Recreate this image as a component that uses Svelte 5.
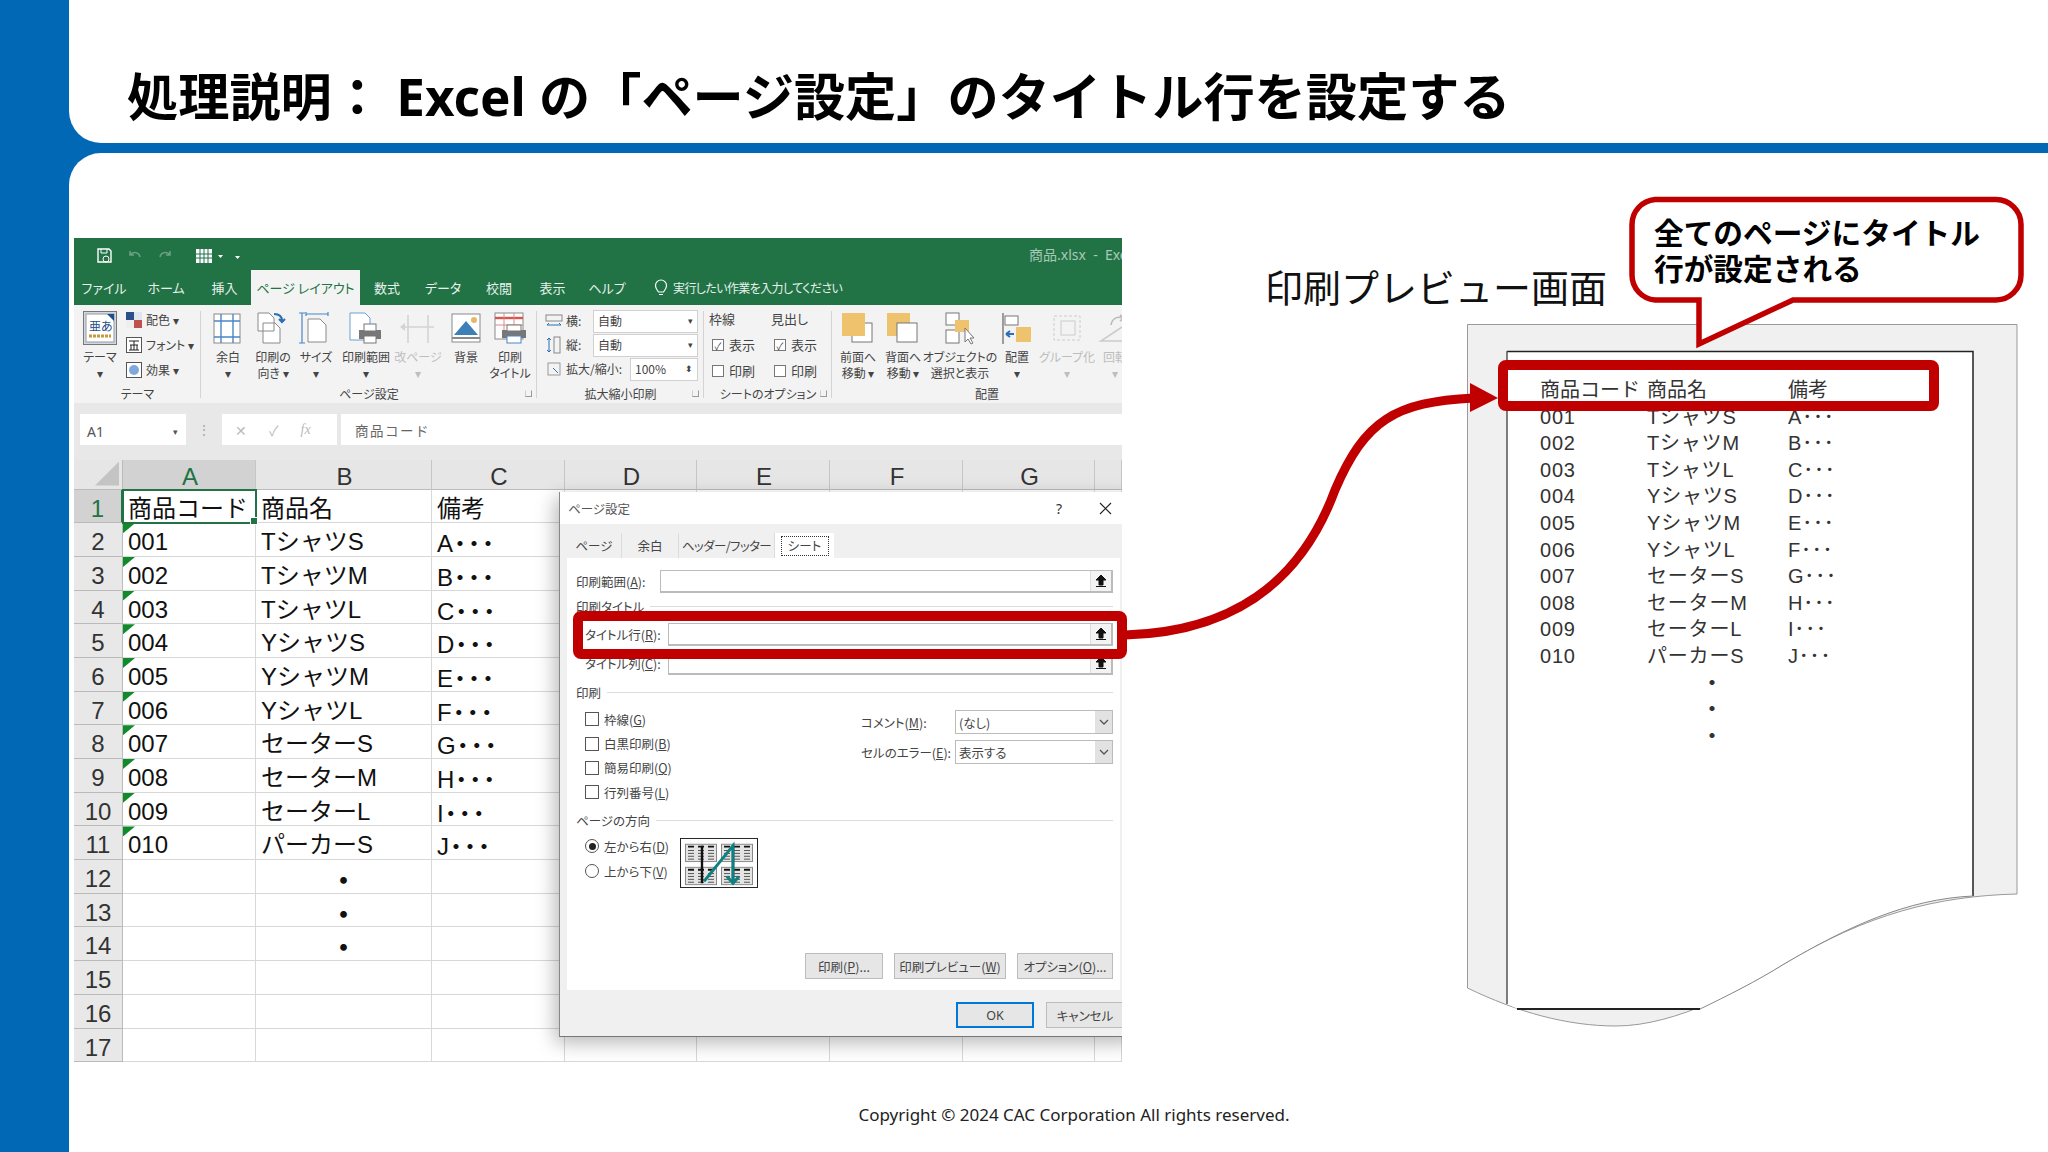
<script>
  const tabs = [
    { t: 'ファイル', w: 60 }, { t: 'ホーム', w: 64 }, { t: '挿入', w: 53 },
    { t: 'ページ レイアウト', w: 109, on: true }, { t: '数式', w: 54 }, { t: 'データ', w: 58 },
    { t: '校閲', w: 54 }, { t: '表示', w: 53 }, { t: 'ヘルプ', w: 56 }
  ];
  const pageBtns = [
    { w: 44, i: 'margin', l: ['余白', '▾'] },
    { w: 46, i: 'orient', l: ['印刷の', '向き ▾'] },
    { w: 40, i: 'size', l: ['サイズ', '▾'] },
    { w: 60, i: 'area', l: ['印刷範囲', '▾'] },
    { w: 44, i: 'break', l: ['改ページ', '▾'], off: true },
    { w: 52, i: 'bg', l: ['背景'] },
    { w: 36, i: 'titles', l: ['印刷', 'タイトル'] }
  ];
  const arrangeBtns = [
    { w: 44, i: 'front', l: ['前面へ', '移動 ▾'] },
    { w: 46, i: 'back', l: ['背面へ', '移動 ▾'] },
    { w: 68, i: 'select', l: ['オブジェクトの', '選択と表示'] },
    { w: 46, i: 'align', l: ['配置', '▾'] },
    { w: 54, i: 'group', l: ['グループ化', '▾'], off: true },
    { w: 42, i: 'rotate', l: ['回転', '▾'], off: true }
  ];
  const columns = ['A', 'B', 'C', 'D', 'E', 'F', 'G', ''];
  const items = [
    ['001', 'TシャツS', 'A'], ['002', 'TシャツM', 'B'], ['003', 'TシャツL', 'C'],
    ['004', 'YシャツS', 'D'], ['005', 'YシャツM', 'E'], ['006', 'YシャツL', 'F'],
    ['007', 'セーターS', 'G'], ['008', 'セーターM', 'H'], ['009', 'セーターL', 'I'],
    ['010', 'パーカーS', 'J']
  ];
  const rowNums = Array.from({ length: 17 }, (_, i) => i + 1);
  const sheetCells = (n) => {
    if (n === 1) return ['商品コード', '商品名', '備考'];
    if (n <= 11) return items[n - 2];
    if (n <= 14) return ['', '・', ''];
    return ['', '', ''];
  };
</script>

{#snippet icon(name)}
  <svg class="ic" width="40" height="34" viewBox="0 0 40 34" fill="none">
    {#if name === 'margin'}
      <rect x="6" y="3" width="26" height="29" fill="#fff" stroke="#8a8a8a" />
      <path d="M13 3v29M25 3v29M6 10h26M6 26h26" stroke="#4a86c8" stroke-width="1.4" />
    {:else if name === 'orient'}
      <path d="M5 2h11l5 5v13H5zM10 12h12l5 5v15H10z" fill="#fff" stroke="#8a8a8a" />
      <path d="M21 3c6 0 8 3 8 7m-3-2l3 3 3-3" stroke="#2b6fb5" stroke-width="2" />
    {:else if name === 'size'}
      <path d="M12 8h12l6 6v17H12z" fill="#fff" stroke="#8a8a8a" />
      <path d="M6 2v30M3 2h6M3 32h6M10 3h22M10 1v4M32 1v4" stroke="#4a86c8" stroke-width="1.2" />
    {:else if name === 'area'}
      <path d="M4 2h15l5 5v22H4z" fill="#fff" stroke="#6f9fd0" />
      <rect x="13" y="19" width="22" height="9" fill="#777" />
      <rect x="18" y="13" width="12" height="7" fill="#fff" stroke="#777" />
      <rect x="18" y="25" width="12" height="7" fill="#fff" stroke="#777" />
    {:else if name === 'break'}
      <path d="M10 4v28M30 4v28M4 16h32" stroke="#d4d4d4" stroke-width="1.6" />
      <path d="M2 16l5-4v8z" fill="#d4d4d4" />
    {:else if name === 'bg'}
      <rect x="6" y="3" width="28" height="28" fill="#fff" stroke="#8a8a8a" />
      <path d="M8 24l12-14 12 14z" fill="#3e7fb8" />
      <path d="M6 27h28" stroke="#8a8a8a" stroke-width="2" />
      <circle cx="28" cy="9" r="3" fill="#e6b86a" />
    {:else if name === 'titles'}
      <rect x="5" y="2" width="28" height="26" fill="#fff" stroke="#8a8a8a" />
      <path d="M5 7h28" stroke="#d9534f" stroke-width="2.4" />
      <path d="M14 2v26M24 2v26M5 14h28" stroke="#d98a85" />
      <rect x="12" y="19" width="24" height="8" fill="#777" />
      <rect x="17" y="14" width="14" height="6" fill="#fff" stroke="#777" />
      <rect x="17" y="25" width="14" height="7" fill="#fff" stroke="#4a86c8" />
    {:else if name === 'front'}
      <rect x="14" y="12" width="20" height="19" fill="#fff" stroke="#777" />
      <rect x="4" y="2" width="23" height="23" fill="#efc26d" />
    {:else if name === 'back'}
      <rect x="4" y="2" width="23" height="23" fill="#efc26d" />
      <rect x="14" y="12" width="20" height="19" fill="#fff" stroke="#777" />
    {:else if name === 'select'}
      <rect x="6" y="2" width="13" height="12" fill="#fff" stroke="#777" />
      <rect x="6" y="19" width="13" height="13" fill="#fff" stroke="#777" />
      <rect x="15" y="9" width="14" height="12" fill="#efc26d" />
      <path d="M25 17v14l3-3 3 5 2-1-3-5h4z" fill="#fff" stroke="#777" />
    {:else if name === 'align'}
      <path d="M6 2v31" stroke="#777" stroke-width="1.4" />
      <rect x="8" y="5" width="13" height="9" fill="#fff" stroke="#777" />
      <rect x="19" y="16" width="15" height="15" fill="#efc26d" />
      <path d="M9 23h8M9 23l4-3M9 23l4 3" stroke="#2b6fb5" stroke-width="2" />
    {:else if name === 'group'}
      <rect x="7" y="5" width="26" height="24" stroke="#ccc" stroke-dasharray="3 2" />
      <rect x="14" y="10" width="14" height="14" stroke="#ccc" />
    {:else}
      <path d="M6 30l24-16v16z" stroke="#ccc" stroke-width="1.6" />
      <path d="M16 14c1-7 7-9 12-7m-3-3l4 3-4 3" stroke="#bbb" stroke-width="1.6" />
    {/if}
  </svg>
{/snippet}

{#snippet rbtn(b)}
  <div class="rbtn" class:off={b.off} style="width:{b.w}px">
    {@render icon(b.i)}
    {#each b.l as line}<span>{line}</span>{/each}
  </div>
{/snippet}

{#snippet upBtn()}
  <span class="up"><svg width="12" height="14" viewBox="0 0 12 14"><path d="M6 1L1 6h3v5h4V6h3zM1 12.500h10" fill="#111" stroke="#111" /></svg></span>
{/snippet}

<div class="slide">
  <div class="panels">
    <header class="topbar">
      <h1>処理説明： Excel の「ページ設定」のタイトル行を設定する</h1>
    </header>

    <main class="body">
      <div class="content">
        <section class="excel">
          <div class="titlebar">
            <svg width="150" height="18" viewBox="0 0 150 18" fill="none" class="qat">
              <path d="M2 2h11l2 2v11H2z" stroke="#fff" stroke-width="1.4" />
              <path d="M5 2v4h6V2" stroke="#fff" />
              <circle cx="10" cy="12" r="3" stroke="#fff" />
              <path d="M34 8c3-4 9-3 10 2M34 4v4h4" stroke="#6da186" stroke-width="1.5" />
              <path d="M74 8c-3-4-9-3-10 2M74 4v4h-4" stroke="#6da186" stroke-width="1.5" />
              <rect x="100" y="2" width="16" height="14" fill="#fff" />
              <path d="M104 2v14M108 2v14M112 2v14M100 7h16M100 11h16" stroke="#217346" />
              <path d="M122 8h5l-2.500 3zM139 5h4M139 9h5l-2.500 3z" fill="#fff" />
            </svg>
            <span class="doc">商品.xlsx&nbsp; - &nbsp;Excel</span>
          </div>
          <nav class="tabs">
            {#each tabs as tab}
              <span class="tab" class:on={tab.on} style="width:{tab.w}px">{tab.t}</span>
            {/each}
            <span class="tell">
              <svg width="14" height="18" viewBox="0 0 14 18" fill="none"><path d="M4.500 13C3 10.500 1.500 9.500 1.500 6.500a5.500 5.500 0 0 1 11 0c0 3-1.500 4-3 6.500zM5 15.500h4" stroke="#fff" stroke-width="1.2" /></svg>
              実行したい作業を入力してください
            </span>
          </nav>

          <div class="ribbon">
            <div class="group theme">
              <div class="gbody">
                <div class="rbtn themebtn">
                  <svg width="34" height="34" viewBox="0 0 34 34"><rect x=".5" y=".5" width="33" height="33" fill="#cfd8e4" stroke="#777" /><rect x="3" y="3" width="28" height="28" fill="#fff" stroke="#999" /><path d="M24 3h7v7z" fill="#1f4e8a" /><text x="6" y="20" font-size="12" fill="#1f4e8a" font-family="Noto Sans CJK JP">亜あ</text><path d="M6 25h22" stroke="#c49a3b" stroke-width="3" stroke-dasharray="3 1" /></svg>
                  <span>テーマ</span><span>▾</span>
                </div>
                <div class="themelist">
                  <div><svg width="16" height="16" viewBox="0 0 16 16"><rect width="8" height="8" fill="#2c4f8c" /><rect x="8" width="8" height="8" fill="#dfe6f0" /><rect y="8" width="8" height="8" fill="#eee" /><rect x="8" y="8" width="8" height="8" fill="#c0504d" /></svg>配色 ▾</div>
                  <div><svg width="16" height="16" viewBox="0 0 16 16"><rect x=".5" y=".5" width="15" height="15" fill="#fff" stroke="#555" /><path d="M3 4h10M8 4v9M4 8h8M3 13h10M5 8v5M11 8v5" stroke="#222" /></svg>フォント ▾</div>
                  <div><svg width="16" height="16" viewBox="0 0 16 16"><rect x=".5" y=".5" width="15" height="15" fill="#fff" stroke="#555" /><circle cx="8" cy="8" r="5" fill="#7fa9dc" /></svg>効果 ▾</div>
                </div>
              </div>
              <div class="glabel">テーマ</div>
            </div>

            <div class="group page">
              <div class="gbody">
                {#each pageBtns as b}{@render rbtn(b)}{/each}
              </div>
              <div class="glabel">ページ設定<i class="launch"></i></div>
            </div>

            <div class="group scale">
              <div class="gbody scalebody">
                <div class="srow"><svg width="18" height="14" viewBox="0 0 18 14" fill="none"><rect x="1" y="1" width="16" height="6" stroke="#888" /><path d="M2 11h14M2 11l2-2M16 11l-2-2" stroke="#2b6fb5" /></svg><span>横:</span><b class="sel">自動<em>▾</em></b></div>
                <div class="srow"><svg width="18" height="18" viewBox="0 0 18 18" fill="none"><rect x="9" y="1" width="6" height="16" stroke="#888" /><path d="M4 2v14M4 2L2 4M4 2l2 2M4 16l-2-2M4 16l2-2" stroke="#2b6fb5" /></svg><span>縦:</span><b class="sel">自動<em>▾</em></b></div>
                <div class="srow wide"><svg width="14" height="14" viewBox="0 0 14 14" fill="none"><rect x="1" y="1" width="12" height="12" stroke="#999" /><path d="M6 6l5 5" stroke="#2b6fb5" /></svg><span>拡大/縮小:</span><b class="sel pct">100%<em>⬍</em></b></div>
              </div>
              <div class="glabel">拡大縮小印刷<i class="launch"></i></div>
            </div>

            <div class="group sheetopt">
              <div class="gbody opts">
                <div class="optcol">
                  <span class="opthead">枠線</span>
                  <span class="optline"><i class="cbx">✓</i>表示</span>
                  <span class="optline"><i class="cbx"></i>印刷</span>
                </div>
                <div class="optcol">
                  <span class="opthead">見出し</span>
                  <span class="optline"><i class="cbx">✓</i>表示</span>
                  <span class="optline"><i class="cbx"></i>印刷</span>
                </div>
              </div>
              <div class="glabel">シートのオプション<i class="launch"></i></div>
            </div>

            <div class="group arrange">
              <div class="gbody">
                {#each arrangeBtns as b}{@render rbtn(b)}{/each}
              </div>
              <div class="glabel shift">配置</div>
            </div>
          </div>

          <div class="formula">
            <div class="namebox">A1<em>▾</em></div>
            <span class="vdots">⋮</span>
            <div class="fxbox"><span>✕</span><span>✓</span><i>fx</i></div>
            <div class="fxinput">商品コード</div>
          </div>

          <div class="sheet">
            <div class="corner"><i></i></div>
            {#each columns as c, i}
              <div class="colhead" class:sel={i === 0}>{c}</div>
            {/each}
            {#each rowNums as n}
              <div class="rowhead" class:sel={n === 1}>{n}</div>
              {#each sheetCells(n) as val, i}
                <div class="cell" class:active={n === 1 && i === 0} class:flag={n > 1 && n <= 11 && i === 0} class:center={n > 11 && i === 1}>
                  {val}{#if n > 1 && n <= 11 && i === 2}<span class="dots">･･･</span>{/if}
                </div>
              {/each}
              {#each [0, 1, 2, 3, 4] as k}<div class="cell"></div>{/each}
            {/each}
          </div>

          <div class="dialog">
            <div class="dhead"><span>ページ設定</span><b>?</b><svg width="13" height="13" viewBox="0 0 13 13"><path d="M1 1l11 11M12 1L1 12" stroke="#222" stroke-width="1.1" /></svg></div>
            <div class="dtabs">
              <span class="dtab w1">ページ</span>
              <span class="dtab w2">余白</span>
              <span class="dtab w3">ヘッダー/フッター</span>
              <span class="dtab w4 on"><i>シート</i></span>
            </div>
            <div class="dpanel">
              <div class="frow"><label class="l1">印刷範囲(<u>A</u>):</label><div class="inp">{@render upBtn()}</div></div>
              <div class="gtitle">印刷タイトル</div>
              <div class="frow inset r2"><label class="l2">タイトル行(<u>R</u>):</label><div class="inp">{@render upBtn()}</div></div>
              <div class="frow inset r3"><label class="l2">タイトル列(<u>C</u>):</label><div class="inp">{@render upBtn()}</div></div>
              <div class="gtitle g2">印刷</div>
              <div class="printopts">
                <div class="checks">
                  <span><i class="box"></i>枠線(<u>G</u>)</span>
                  <span><i class="box"></i>白黒印刷(<u>B</u>)</span>
                  <span><i class="box"></i>簡易印刷(<u>Q</u>)</span>
                  <span><i class="box"></i>行列番号(<u>L</u>)</span>
                </div>
                <div class="selects">
                  <div class="sr"><label>コメント(<u>M</u>):</label><div class="combo">(なし)<em><svg width="10" height="6" viewBox="0 0 10 6" fill="none"><path d="M1 1l4 4 4-4" stroke="#555" stroke-width="1.3" /></svg></em></div></div>
                  <div class="sr"><label>セルのエラー(<u>E</u>):</label><div class="combo">表示する<em><svg width="10" height="6" viewBox="0 0 10 6" fill="none"><path d="M1 1l4 4 4-4" stroke="#555" stroke-width="1.3" /></svg></em></div></div>
                </div>
              </div>
              <div class="gtitle g3">ページの方向</div>
              <div class="orderrow">
                <div class="radios">
                  <span><i class="rad on"></i>左から右(<u>D</u>)</span>
                  <span><i class="rad"></i>上から下(<u>V</u>)</span>
                </div>
                <svg class="order" width="78" height="50" viewBox="0 0 78 52" preserveAspectRatio="none" fill="none">
                  <rect x=".5" y=".5" width="77" height="51" fill="#fff" stroke="#222" />
                  {#each [[5, 6], [41, 6], [5, 30], [41, 30]] as p}
                    <g transform="translate({p[0]} {p[1]})">
                      <rect x=".5" y=".5" width="31" height="18" fill="#e4e4e4" stroke="#888" />
                      <path d="M3 3h6M13 3h6M23 3h6" stroke="#111" stroke-width="2" />
                      <path d="M3 7h6M3 10h6M3 13h6M3 16h6M13 7h6M13 10h6M13 13h6M13 16h6M23 7h6M23 10h6M23 13h6M23 16h6" stroke="#555" />
                    </g>
                  {/each}
                  <path d="M22 8v39M53 8v37" stroke="#111" stroke-width="2.400" />
                  <path d="M24 45L53 8v37" stroke="#0f8080" stroke-width="3" />
                  <path d="M47 40l6 7 6-7" stroke="#0f8080" stroke-width="3" />
                </svg>
              </div>
              <div class="dbtns">
                <button class="b1">印刷(<u>P</u>)...</button>
                <button class="b2">印刷プレビュー(<u>W</u>)</button>
                <button class="b3">オプション(<u>O</u>)...</button>
              </div>
            </div>
            <div class="dfoot">
              <button class="ok">OK</button>
              <button class="cancel">キャンセル</button>
            </div>
          </div>
        </section>

        <section class="right">
          <h2>印刷プレビュー画面</h2>
          <div class="paper">
            <svg class="sheetbg" width="552" height="704" viewBox="0 0 552 704" fill="none">
              <path d="M.5.500H550V570C470 572 400 590 317 640C280 662 210 702 149 702C100 702 50 688 .5 664z" fill="#f0f0f0" stroke="#999" />
              <path d="M40 27.500H506V572C440 575 380 603 317 640C290 657 260 672 233 685H51L40 680z" fill="#fff" />
              <path d="M40 27.500H506V572" stroke="#222" stroke-width="1.500" />
              <path d="M40 27V680" stroke="#555" stroke-width="1.500" />
              <path d="M50 685H233" stroke="#222" stroke-width="2" />
              <path d="M506 572C440 575 380 603 317 640C290 657 260 672 233 685" stroke="#888" />
            </svg>
            <div class="plist">
              <div class="pr phead"><span>商品コード</span><span>商品名</span><span>備考</span></div>
              {#each items as it}
                <div class="pr"><span>{it[0]}</span><span>{it[1]}</span><span>{it[2]}･･･</span></div>
              {/each}
              <div class="pdot">・</div>
              <div class="pdot">・</div>
              <div class="pdot">・</div>
            </div>
          </div>
        </section>
      </div>
      <footer class="copy">Copyright © 2024 CAC Corporation All rights reserved.</footer>
    </main>
  </div>

  <svg class="marks" width="2048" height="1152" viewBox="0 0 2048 1152" fill="none">
    <rect x="578" y="616" width="544" height="38" rx="3" stroke="#c00000" stroke-width="10" />
    <rect x="1503" y="365" width="431" height="41" rx="3" stroke="#c00000" stroke-width="10" />
    <path d="M1125 635C1230 632 1300 585 1335 490C1365 420 1395 402 1474 398" stroke="#c00000" stroke-width="9" />
    <path d="M1470 383L1498 398L1470 412z" fill="#c00000" />
    <path d="M1655 199.500H1996A25 25 0 0 1 2021 224.500V275A25 25 0 0 1 1996 300H1793L1699 344L1699 300H1655A25 25 0 0 1 1632 275V224.500A25 25 0 0 1 1655 199.500z" fill="#fff" stroke="#c00000" stroke-width="5.500" />
  </svg>
  <div class="callout">全てのページにタイトル<br />行が設定される</div>
</div>

<style>
  :global(body) {
    margin: 0;
  }
  * {
    box-sizing: border-box;
  }
  em, i {
    font-style: normal;
  }
  .slide {
    position: relative;
    width: 2048px;
    height: 1152px;
    overflow: hidden;
    background: #0068b4;
    padding-left: 69px;
    font-family: "Noto Sans", "Noto Sans CJK JP", sans-serif;
    color: #000;
  }
  .panels {
    display: flex;
    flex-direction: column;
    gap: 10px;
    height: 100%;
  }
  .topbar {
    height: 143px;
    background: #fff;
    border-bottom-left-radius: 32px;
    padding: 62px 0 0 58px;
  }
  h1 {
    margin: 0;
    font-size: 51.200px;
    line-height: 68px;
    font-weight: 700;
    white-space: nowrap;
  }
  .body {
    flex: 1;
    background: #fff;
    border-top-left-radius: 32px;
    padding: 85px 0 0 5px;
    display: flex;
    flex-direction: column;
  }
  .content {
    display: flex;
    height: 824px;
  }

  /* excel window */
  .excel {
    position: relative;
    width: 1048px;
    height: 824px;
    overflow: hidden;
    flex: none;
    background: #fff;
    font-family: "Noto Sans CJK JP", sans-serif;
    font-feature-settings: "palt";
    color: #444;
  }
  .titlebar {
    height: 32px;
    background: #217346;
    display: flex;
    align-items: center;
    padding: 4px 0 0 22px;
    overflow: hidden;
  }
  .qat {
    flex: none;
  }
  .doc {
    flex: none;
    color: #a9c9b7;
    font-size: 14px;
    white-space: nowrap;
    margin: -5px 0 0 783px;
    font-family: "Noto Sans", "Noto Sans CJK JP", sans-serif;
  }
  .tabs {
    height: 35px;
    background: #217346;
    display: flex;
    color: #e8f1ec;
    font-size: 13px;
  }
  .tab {
    display: flex;
    align-items: center;
    justify-content: center;
    white-space: nowrap;
  }
  .tab.on {
    background: #f3f3f3;
    color: #217346;
  }
  .tell {
    display: flex;
    align-items: center;
    gap: 5px;
    margin-left: 19px;
    font-size: 12px;
    letter-spacing: -0.6px;
    white-space: nowrap;
  }
  .ribbon {
    height: 98px;
    background: #f3f3f3;
    display: flex;
    font-size: 12px;
    line-height: 15.500px;
  }
  .group {
    display: flex;
    flex-direction: column;
    height: 100%;
    position: relative;
    flex: none;
  }
  .group::after {
    content: "";
    position: absolute;
    right: 0;
    top: 6px;
    bottom: 5px;
    width: 1px;
    background: #d4d4d4;
  }
  .gbody {
    height: 81px;
    display: flex;
    padding-top: 6px;
  }
  .glabel {
    height: 17px;
    text-align: center;
    position: relative;
    white-space: nowrap;
  }
  .launch {
    position: absolute;
    right: 5px;
    top: 4px;
    width: 7px;
    height: 7px;
    border: 1px solid #999;
    border-top-color: transparent;
    border-left-color: #ccc;
  }
  .rbtn {
    display: flex;
    flex-direction: column;
    align-items: center;
    text-align: center;
    white-space: nowrap;
  }
  .rbtn .ic {
    margin-bottom: 4px;
    flex: none;
  }
  .rbtn span {
    display: block;
  }
  .rbtn.off {
    color: #bdbdbd;
  }
  .theme {
    width: 127px;
  }
  .theme .gbody {
    padding-left: 9px;
  }
  .themebtn {
    width: 34px;
  }
  .themebtn svg {
    margin-bottom: 4px;
    flex: none;
  }
  .themelist {
    margin-left: 9px;
    display: flex;
    flex-direction: column;
    gap: 8px;
  }
  .themelist div {
    display: flex;
    align-items: center;
    gap: 4px;
    height: 17px;
    white-space: nowrap;
  }
  .page {
    width: 336px;
  }
  .page .gbody {
    padding-left: 5px;
  }
  .scale {
    width: 167px;
  }
  .scalebody {
    flex-direction: column;
    padding: 4px 6px 0 8px;
    gap: 0;
  }
  .srow {
    display: flex;
    align-items: center;
    gap: 3px;
    height: 24px;
    white-space: nowrap;
  }
  .srow svg {
    width: 18px;
    flex: none;
  }
  .srow > span {
    width: 24px;
    flex: none;
  }
  .srow.wide > span {
    width: 64px;
    margin-right: -3px;
  }
  .sel {
    font-weight: 400;
  }
  .srow .sel {
    flex: 1;
    height: 23px;
    background: #fff;
    border: 1px solid #d0d0d0;
    display: flex;
    align-items: center;
    justify-content: space-between;
    padding: 0 4px;
  }
  .srow .sel em {
    font-size: 9px;
  }
  .sheetopt {
    width: 128px;
  }
  .opts {
    padding: 5px 0 0 5px;
    gap: 12px;
  }
  .optcol {
    display: flex;
    flex-direction: column;
    gap: 8px;
    width: 50px;
    font-size: 13px;
    white-space: nowrap;
  }
  .opthead, .optline {
    height: 18px;
    display: flex;
    align-items: center;
  }
  .optline {
    gap: 5px;
    padding-left: 3px;
  }
  .cbx {
    width: 12px;
    height: 12px;
    background: #fff;
    border: 1px solid #777;
    font-size: 10px;
    line-height: 11px;
    text-align: center;
  }
  .arrange {
    flex: 1;
  }
  .arrange::after {
    display: none;
  }
  .arrange .gbody {
    padding-left: 4px;
  }
  .shift {
    width: 310px;
  }
  .formula {
    height: 57px;
    background: #e8e8e8;
    padding: 11px 0 15px 6px;
    display: flex;
    gap: 4px;
    font-size: 14px;
  }
  .namebox, .fxbox, .fxinput {
    background: #fff;
    height: 31px;
    display: flex;
    align-items: center;
  }
  .namebox {
    width: 106px;
    justify-content: space-between;
    padding: 3px 8px 0 7px;
    font-family: "Noto Sans", sans-serif;
    color: #555;
  }
  .namebox em {
    font-size: 9px;
  }
  .vdots {
    width: 28px;
    text-align: center;
    color: #aaa;
    line-height: 31px;
  }
  .fxbox {
    width: 115px;
    padding-left: 13px;
    gap: 22px;
    color: #bbb;
  }
  .fxbox i {
    font-family: "Liberation Serif", serif;
    font-style: italic;
  }
  .fxinput {
    flex: 1;
    padding-left: 14px;
    color: #666;
    letter-spacing: 1.500px;
    font-feature-settings: normal;
    font-size: 13.500px;
  }

  /* sheet */
  .sheet {
    display: grid;
    grid-template-columns: 49px 133px 176px 133px 132px 133px 133px 132px 27px;
    grid-template-rows: 29.500px repeat(17, 33.700px);
    font-family: "Liberation Sans", "Noto Sans CJK JP", sans-serif;
    font-feature-settings: normal;
    font-size: 24px;
    color: #111;
  }
  .corner {
    background: #e6e6e6;
    border-bottom: 1px solid #bbb;
    border-right: 1px solid #bbb;
    position: relative;
  }
  .corner i {
    position: absolute;
    right: 3px;
    bottom: 3px;
    width: 24px;
    height: 24px;
    background: #c4c4c4;
    clip-path: polygon(100% 0, 100% 100%, 0 100%);
  }
  .colhead {
    background: #e6e6e6;
    border-right: 1px solid #c6c6c6;
    border-bottom: 1px solid #bbb;
    text-align: center;
    line-height: 33px;
    padding-left: 2px;
    color: #333;
  }
  .colhead.sel {
    background: #d2d2d2;
    color: #217346;
  }
  .rowhead {
    background: #e8e8e8;
    border-bottom: 1px solid #bbb;
    border-right: 1px solid #bbb;
    text-align: center;
    line-height: 38px;
    height: 33.700px;
    color: #333;
  }
  .rowhead.sel {
    background: #d2d2d2;
    color: #217346;
    border-right: 2px solid #217346;
  }
  .cell {
    position: relative;
    border-right: 1px solid #d8d8d8;
    border-bottom: 1px solid #d8d8d8;
    line-height: 38px;
    height: 33.700px;
    padding-left: 5px;
    white-space: nowrap;
    color: #111;
  }
  .cell.center {
    text-align: center;
    padding-left: 0;
    font-weight: 900;
    font-family: "Noto Sans CJK JP", sans-serif;
  }
  .cell.flag::before {
    content: "";
    position: absolute;
    left: 0;
    top: 0;
    width: 12px;
    height: 10px;
    background: #108a2a;
    clip-path: polygon(0 0, 100% 0, 0 100%);
  }
  .cell.active {
    outline: 2px solid #217346;
    outline-offset: -1px;
    z-index: 1;
  }
  .cell.active::after {
    content: "";
    position: absolute;
    right: -3px;
    bottom: -3px;
    width: 6px;
    height: 6px;
    background: #217346;
    border: 1px solid #fff;
  }
  .dots {
    font-family: "Noto Sans CJK JP", sans-serif;
    font-weight: 900;
    letter-spacing: 2px;
    margin-left: 1px;
  }

  /* page setup dialog */
  .dialog {
    position: absolute;
    left: 485px;
    top: 254px;
    width: 580px;
    height: 545px;
    background: #f0f0f0;
    border-left: 1px solid #888;
    border-bottom: 1px solid #777;
    box-shadow: -4px 6px 18px rgba(0, 0, 0, 0.28);
    display: flex;
    flex-direction: column;
    font-size: 12.500px;
    color: #444;
    z-index: 2;
  }
  .dhead {
    height: 32px;
    background: #fff;
    display: flex;
    align-items: center;
    padding: 0 0 0 8px;
    white-space: nowrap;
  }
  .dhead span {
    width: 488px;
    color: #555;
  }
  .dhead b {
    width: 43px;
    font-weight: 400;
    color: #333;
    font-size: 14px;
    font-family: "Noto Sans", sans-serif;
  }
  .dtabs {
    height: 34px;
    padding: 9px 0 0 7px;
    display: flex;
    align-items: flex-end;
  }
  .dtab {
    height: 25px;
    display: flex;
    align-items: center;
    justify-content: center;
    background: #f0f0f0;
    border-right: 1px solid #dcdcdc;
    white-space: nowrap;
  }
  .w1 { width: 55px; }
  .w2 { width: 57px; }
  .w3 { width: 96px; letter-spacing: -0.6px; }
  .w4 { width: 59px; }
  .dtab.on {
    background: #fff;
    border: 0;
  }
  .dtab.on i {
    border: 1px dotted #333;
    width: 48px;
    height: 20px;
    display: flex;
    align-items: center;
    justify-content: center;
  }
  .dpanel {
    margin-left: 7px;
    width: 553px;
    height: 432px;
    background: #fff;
    padding: 12px 7px 11px 9px;
    display: flex;
    flex-direction: column;
  }
  .frow {
    display: flex;
    height: 23px;
    align-items: center;
    white-space: nowrap;
    flex: none;
  }
  .inset {
    padding-left: 9px;
  }
  .r2 {
    margin-top: 7px;
  }
  .r3 {
    margin-top: 6px;
  }
  .l1 {
    width: 84px;
  }
  .l2 {
    width: 83px;
  }
  .inp {
    flex: 1;
    height: 100%;
    border: 1px solid #bbb;
    border-bottom-width: 2px;
    display: flex;
    justify-content: flex-end;
    background: #fff;
  }
  .up {
    width: 22px;
    background: #f3f3f3;
    border-left: 1px solid #ddd;
    border-right: 1px solid #bbb;
    display: flex;
    align-items: center;
    justify-content: center;
  }
  .gtitle {
    display: flex;
    align-items: center;
    gap: 6px;
    height: 20px;
    margin-top: 3px;
    white-space: nowrap;
    flex: none;
  }
  .gtitle::after {
    content: "";
    flex: 1;
    height: 1px;
    background: #dcdcdc;
  }
  .g2 {
    margin-top: 7px;
  }
  .g3 {
    margin-top: 6px;
  }
  .printopts {
    display: flex;
    margin-top: 5px;
    flex: none;
  }
  .checks {
    width: 285px;
    padding-left: 9px;
    display: flex;
    flex-direction: column;
  }
  .checks span, .radios span {
    height: 24.400px;
    display: flex;
    align-items: center;
    white-space: nowrap;
  }
  .box {
    width: 14px;
    height: 14px;
    border: 1px solid #555;
    margin-right: 5px;
  }
  .selects {
    display: flex;
    flex-direction: column;
    gap: 6px;
    flex: 1;
    padding-top: 3px;
  }
  .sr {
    display: flex;
    align-items: center;
    height: 24px;
    white-space: nowrap;
  }
  .sr label {
    width: 94px;
  }
  .combo {
    flex: 1;
    height: 100%;
    border: 1px solid #bbb;
    display: flex;
    align-items: center;
    justify-content: space-between;
    padding-left: 3px;
  }
  .combo em {
    width: 17px;
    height: 100%;
    background: #e2e2e2;
    display: flex;
    align-items: center;
    justify-content: center;
  }
  .orderrow {
    display: flex;
    padding: 3px 0 0 9px;
    flex: none;
  }
  .radios {
    width: 95px;
    display: flex;
    flex-direction: column;
  }
  .radios span {
    height: 25px;
  }
  .rad {
    width: 14px;
    height: 14px;
    border: 1px solid #555;
    border-radius: 50%;
    margin-right: 5px;
    flex: none;
    position: relative;
  }
  .rad.on::after {
    content: "";
    position: absolute;
    inset: 2.500px;
    border-radius: 50%;
    background: #222;
  }
  .order {
    margin-top: 4px;
  }
  .dbtns {
    margin-top: auto;
    display: flex;
    justify-content: flex-end;
    gap: 11px;
  }
  button {
    height: 26px;
    padding: 0;
    background: #e6e6e6;
    border: 1px solid #bcbcbc;
    font: inherit;
    color: #444;
    white-space: nowrap;
  }
  .b1 { width: 78px; }
  .b2 { width: 112px; }
  .b3 { width: 96px; }
  .dfoot {
    display: flex;
    gap: 12px;
    padding: 12px 0 0 396px;
  }
  .ok {
    width: 78px;
    border: 2px solid #0078d7;
    font-family: "Noto Sans", sans-serif;
  }
  .cancel {
    width: 78px;
  }

  /* print preview */
  .right {
    flex: 1;
    padding: 26px 0 0 143px;
    min-width: 0;
  }
  h2 {
    margin: 0;
    width: fit-content;
    font-size: 38px;
    line-height: 44px;
    font-weight: 400;
    font-family: "Noto Sans CJK JP", sans-serif;
    color: #111;
  }
  .paper {
    position: relative;
    margin: 16px 0 0 202px;
    width: 552px;
    height: 704px;
  }
  .sheetbg {
    position: absolute;
    left: 0;
    top: 0;
  }
  .plist {
    position: relative;
    padding: 52.700px 0 0 73px;
    font-family: "Liberation Sans", "Noto Sans CJK JP", sans-serif;
    font-size: 20px;
    color: #333;
    letter-spacing: 0.8px;
  }
  .pr {
    display: grid;
    grid-template-columns: 107px 141px 1fr;
    height: 26.600px;
    line-height: 26.600px;
    white-space: nowrap;
  }
  .pr.phead {
    height: 27px;
    letter-spacing: 0;
  }
  .pdot {
    height: 26.600px;
    line-height: 26.600px;
    padding-left: 162px;
    font-weight: 700;
  }

  .marks {
    position: absolute;
    left: 0;
    top: 0;
    z-index: 5;
    pointer-events: none;
  }
  .callout {
    position: absolute;
    left: 1654px;
    top: 214px;
    z-index: 6;
    font-size: 29.700px;
    line-height: 36px;
    font-weight: 700;
    font-family: "Noto Sans CJK JP", sans-serif;
    white-space: nowrap;
  }
  .copy {
    margin: 0 0 0 500px;
    width: 1000px;
    padding-top: 41px;
    text-align: center;
    font-size: 17px;
    line-height: 24px;
    color: #222;
    font-family: "Noto Sans", sans-serif;
  }
</style>
